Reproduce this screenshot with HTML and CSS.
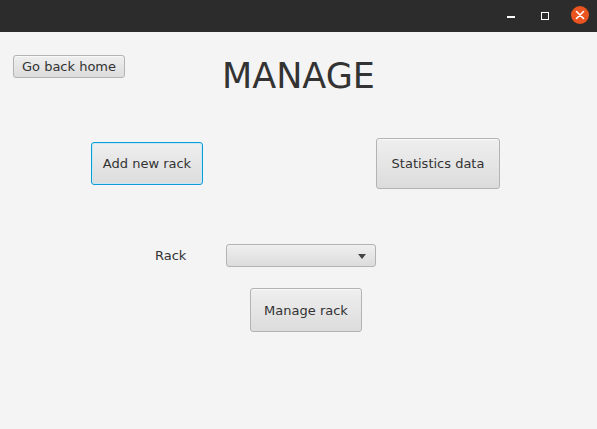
FILE: index.html
```html
<!DOCTYPE html>
<html>
<head>
<meta charset="utf-8">
<link rel="stylesheet" href="styles.css">
</head>
<body>
<div class="titlebar">
  <span class="tb-min"></span>
  <span class="tb-max"></span>
  <span class="tb-close">
    <svg width="18" height="18" viewBox="0 0 18 18"><circle cx="9" cy="9" r="9" fill="#e95420"/><path d="M5.5 5.5 L12.5 12.5 M12.5 5.5 L5.5 12.5" stroke="#fff" stroke-width="1.6" stroke-linecap="round"/></svg>
  </span>
</div>
<div class="content">
  <div class="top">
    <button class="btn btn-home">Go back home</button>
    <h1 class="title">MANAGE</h1>
    <div></div>
  </div>
  <div class="actions">
    <button class="btn btn-add focused">Add new rack</button>
    <button class="btn btn-stats">Statistics data</button>
  </div>
  <div class="rack-row">
    <span class="rack-label">Rack</span>
    <div class="combo"><span class="arrow"></span></div>
  </div>
  <div class="manage-row">
    <button class="btn btn-manage">Manage rack</button>
  </div>
</div>
</body>
</html>
```
FILE: styles.css
```css
html, body {
  margin: 0;
  padding: 0;
}
body {
  width: 597px;
  height: 429px;
  background: #f4f4f4;
  font-family: "DejaVu Sans", sans-serif;
  font-size: 13px;
  color: #333;
  overflow: hidden;
}
.titlebar {
  height: 32px;
  background: #2c2c2c;
  display: flex;
  align-items: center;
  justify-content: flex-end;
  padding-right: 8px;
  box-sizing: border-box;
}
.tb-min {
  width: 8px;
  height: 2px;
  background: #fff;
  margin-top: 2px;
  margin-right: 26px;
}
.tb-max {
  width: 6px;
  height: 6px;
  border: 1.5px solid #fff;
  margin-right: 22px;
  margin-top: -1px;
}
.tb-close {
  width: 18px;
  height: 18px;
  display: block;
  margin-top: -3px;
}
.tb-close svg { display: block; }

.content {
  display: flex;
  flex-direction: column;
}
.btn {
  font-family: "DejaVu Sans", sans-serif;
  font-size: 13px;
  color: #333;
  background: linear-gradient(#efefef, #dcdcdc);
  border: 1px solid #b3b3b3;
  border-radius: 3px;
  box-shadow: inset 0 1px 0 rgba(255,255,255,0.6);
  padding: 0;
  box-sizing: border-box;
  margin: 0;
}
.focused {
  border-color: #0b9ed6;
  box-shadow: inset 0 0 0 1px #c8e7f5;
}
.top {
  display: grid;
  grid-template-columns: 1fr auto 1fr;
  margin-top: 23px;
}
.btn-home {
  justify-self: start;
  margin-left: 13px;
  width: 112px;
  height: 23px;
}
.title {
  margin: 1px 0 0 0;
  font-weight: normal;
  font-size: 35px;
  line-height: 41px;
  color: #333;
}
.actions {
  display: flex;
  align-items: center;
  margin-top: 41px;
}
.btn-add {
  margin-left: 91px;
  width: 112px;
  height: 43px;
}
.btn-stats {
  margin-left: 173px;
  width: 124px;
  height: 51px;
}
.rack-row {
  display: flex;
  align-items: center;
  margin-top: 55px;
}
.rack-label {
  margin-left: 155px;
  width: 71px;
}
.combo {
  width: 150px;
  height: 23px;
  box-sizing: border-box;
  border: 1px solid #b3b3b3;
  border-radius: 3px;
  background: linear-gradient(#efefef, #dcdcdc);
  display: flex;
  align-items: center;
  justify-content: flex-end;
  padding-right: 9px;
}
.arrow {
  width: 0;
  height: 0;
  border-left: 4px solid transparent;
  border-right: 4px solid transparent;
  border-top: 5px solid #444;
  margin-top: 1px;
}
.manage-row {
  display: flex;
  margin-top: 21px;
}
.btn-manage {
  margin-left: 250px;
  width: 112px;
  height: 44px;
}
```
